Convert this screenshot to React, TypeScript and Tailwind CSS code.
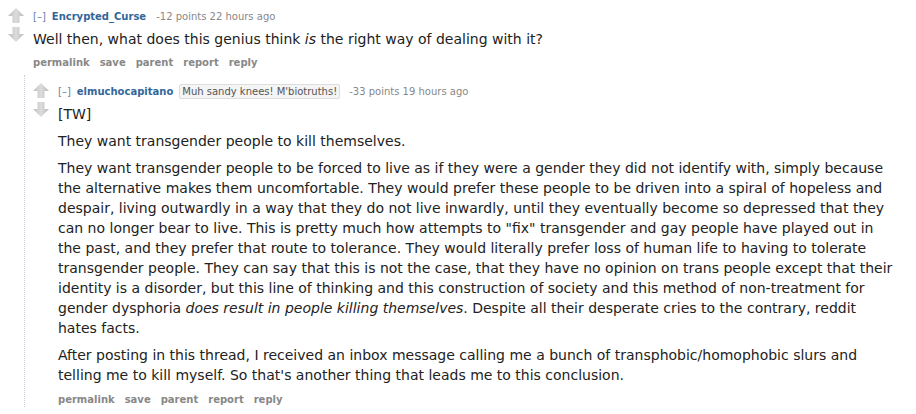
import React from "react";

function Arrows() {
  return (
    <div className="flex flex-col items-center gap-[4px] w-[16px] shrink-0">
      <svg width="16" height="15" viewBox="0 0 16 15">
        <defs>
          <linearGradient id="ga" x1="0" y1="0" x2="1" y2="0">
            <stop offset="0" stopColor="#bdbdbd" />
            <stop offset="0.5" stopColor="#dcdcdc" />
            <stop offset="1" stopColor="#bababa" />
          </linearGradient>
        </defs>
        <path d="M8 0 L16 8 L11.5 8 L11.5 15 L4.5 15 L4.5 8 L0 8 Z" fill="url(#ga)" />
      </svg>
      <svg width="16" height="15" viewBox="0 0 16 15">
        <defs>
          <linearGradient id="gb" x1="0" y1="0" x2="1" y2="0">
            <stop offset="0" stopColor="#bdbdbd" />
            <stop offset="0.5" stopColor="#dcdcdc" />
            <stop offset="1" stopColor="#bababa" />
          </linearGradient>
        </defs>
        <path d="M8 15 L16 7 L11.5 7 L11.5 0 L4.5 0 L4.5 7 L0 7 Z" fill="url(#gb)" />
      </svg>
    </div>
  );
}

function Buttons() {
  return (
    <div className="flex gap-[10px] text-[10px] font-bold text-[#888] leading-[14px]">
      <span>permalink</span>
      <span>save</span>
      <span>parent</span>
      <span>report</span>
      <span>reply</span>
    </div>
  );
}

export default function App() {
  return (
    <div
      className="w-[916px] h-[414px] overflow-hidden bg-white text-[#222]"
      style={{ fontFamily: '"DejaVu Sans", Verdana, sans-serif' }}
    >
      <div className="flex pt-[8px] pl-[8px]">
        <Arrows />
        <div className="ml-[9px] flex flex-col pt-[2px]">
          <div className="text-[10px] leading-[14px] text-[#888] flex items-center">
            <span className="text-[#6b7faa]">[–]</span>
            <span className="ml-[6px] font-bold text-[#369]">Encrypted_Curse</span>
            <span className="ml-[10px]">-12 points 22 hours ago</span>
          </div>
          <div className="text-[14px] leading-[20px] mt-[5px] max-w-[840px]">
            Well then, what does this genius think <em>is</em> the right way of dealing with it?
          </div>
          <div className="mt-[7px]">
            <Buttons />
          </div>
        </div>
      </div>

      <div className="ml-[24px] mt-[5px] border-l border-dotted border-[#ccd] pl-[8px] pt-[8px] flex">
        <Arrows />
        <div className="ml-[9px] flex flex-col pt-[1px]">
          <div className="text-[10px] leading-[14px] text-[#888] flex items-center">
            <span className="text-[#6b7faa]">[–]</span>
            <span className="ml-[6px] font-bold text-[#369]">elmuchocapitano</span>
            <span className="ml-[6px] border border-[#ddd] bg-[#f5f5f5] text-[#545454] px-[2px] rounded-[2px] leading-[13px]">
              Muh sandy knees! M'biotruths!
            </span>
            <span className="ml-[9px]">-33 points 19 hours ago</span>
          </div>
          <div className="text-[14px] leading-[20px] max-w-[840px] mt-[5px] flex flex-col gap-[7px]">
            <p>[TW]</p>
            <p>They want transgender people to kill themselves.</p>
            <p>
              They want transgender people to be forced to live as if they were a gender they did not identify with, simply because the alternative makes them uncomfortable. They would prefer these people to be driven into a spiral of hopeless and despair, living outwardly in a way that they do not live inwardly, until they eventually become so depressed that they can no longer bear to live. This is pretty much how attempts to "fix" transgender and gay people have played out in the past, and they prefer that route to tolerance. They would literally prefer loss of human life to having to tolerate transgender people. They can say that this is not the case, that they have no opinion on trans people except that their identity is a disorder, but this line of thinking and this construction of society and this method of non-treatment for gender dysphoria <em>does result in people killing themselves</em>. Despite all their desperate cries to the contrary, reddit hates facts.
            </p>
            <p>
              After posting in this thread, I received an inbox message calling me a bunch of transphobic/homophobic slurs and telling me to kill myself. So that's another thing that leads me to this conclusion.
            </p>
          </div>
          <div className="mt-[8px]">
            <Buttons />
          </div>
        </div>
      </div>
    </div>
  );
}
